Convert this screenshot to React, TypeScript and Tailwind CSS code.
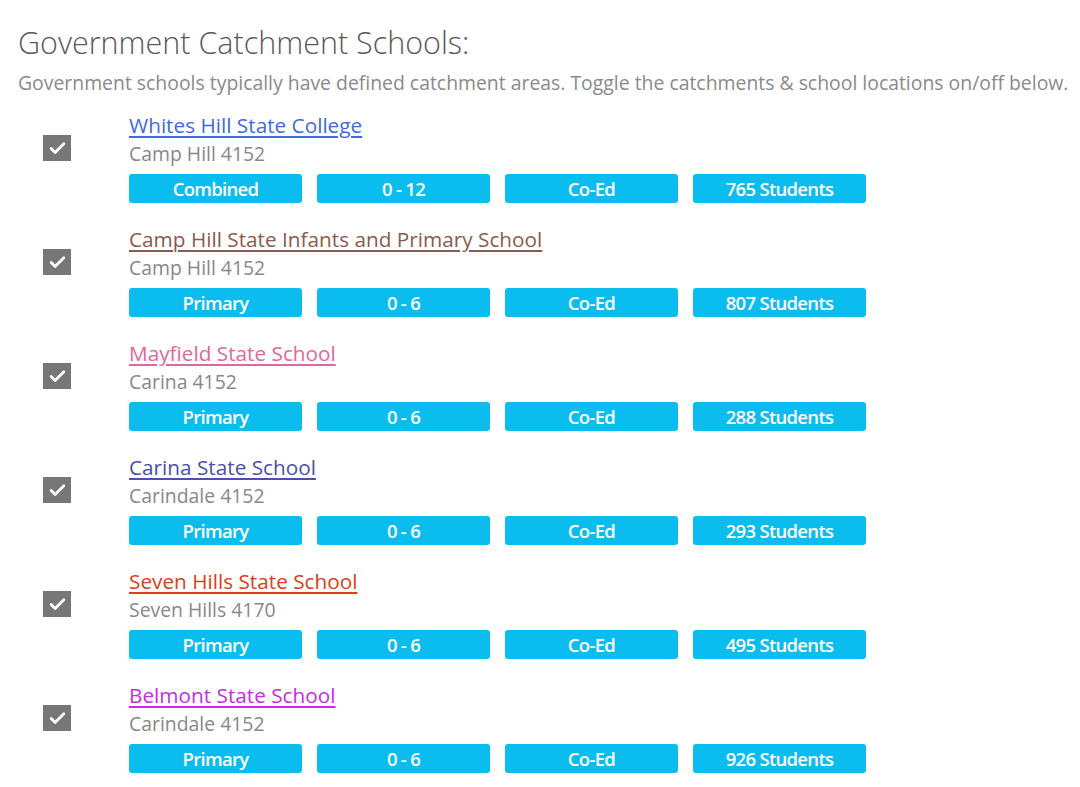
import { Check } from "lucide-react";

type School = {
  name: string;
  suburb: string;
  color: string;
  type: string;
  years: string;
  students: number;
};

const schools: School[] = [
  { name: "Whites Hill State College", suburb: "Camp Hill 4152", color: "text-[#4169e1] decoration-[#4169e1]", type: "Combined", years: "0 - 12", students: 765 },
  { name: "Camp Hill State Infants and Primary School", suburb: "Camp Hill 4152", color: "text-[#8b5a4e] decoration-[#8b5a4e]", type: "Primary", years: "0 - 6", students: 807 },
  { name: "Mayfield State School", suburb: "Carina 4152", color: "text-[#e2679a] decoration-[#e2679a]", type: "Primary", years: "0 - 6", students: 288 },
  { name: "Carina State School", suburb: "Carindale 4152", color: "text-[#4a4fb0] decoration-[#4a4fb0]", type: "Primary", years: "0 - 6", students: 293 },
  { name: "Seven Hills State School", suburb: "Seven Hills 4170", color: "text-[#d9401a] decoration-[#d9401a]", type: "Primary", years: "0 - 6", students: 495 },
  { name: "Belmont State School", suburb: "Carindale 4152", color: "text-[#c42ee0] decoration-[#c42ee0]", type: "Primary", years: "0 - 6", students: 926 },
];

function Badge({ label }: { label: string }) {
  return (
    <span className="w-[173px] h-[29px] rounded-[3px] bg-[#0bbdee] text-white text-[18.5px] font-semibold tracking-[-0.7px] flex items-center justify-center">
      {label}
    </span>
  );
}

function SchoolRow({ school }: { school: School }) {
  return (
    <div className="flex h-[114px]">
      <div className="w-[129px] pl-[43px] pt-[25px]">
        <div className="w-[28px] h-[26px] bg-[#777777] flex items-center justify-center">
          <Check className="text-white" size={19} strokeWidth={3.5} />
        </div>
      </div>
      <div className="flex flex-col">
        <a href="#" className={`text-[20.75px] leading-[30px] underline underline-offset-[3px] ${school.color}`}>
          {school.name}
        </a>
        <span className="text-[19.4px] leading-[28px] text-[#888888]">{school.suburb}</span>
        <div className="flex gap-[15px] mt-[6px]">
          <Badge label={school.type} />
          <Badge label={school.years} />
          <Badge label="Co-Ed" />
          <Badge label={`${school.students} Students`} />
        </div>
      </div>
    </div>
  );
}

export default function App() {
  return (
    <div className="bg-white w-[1080px] h-[787px] overflow-hidden pl-[18px] font-['Open_Sans',sans-serif]">
      <h2 className="pt-[24px] text-[30.5px] leading-[36px] font-light text-[#595959]">
        Government Catchment Schools:
      </h2>
      <p className="mt-[9px] text-[19.4px] leading-[28px] text-[#8a8a8a] whitespace-nowrap">
        Government schools typically have defined catchment areas. Toggle the catchments &amp; school locations on/off below.
      </p>
      <div className="mt-[13px] -ml-[18px]">
        {schools.map(s => (
          <SchoolRow key={s.name} school={s} />
        ))}
      </div>
    </div>
  );
}
